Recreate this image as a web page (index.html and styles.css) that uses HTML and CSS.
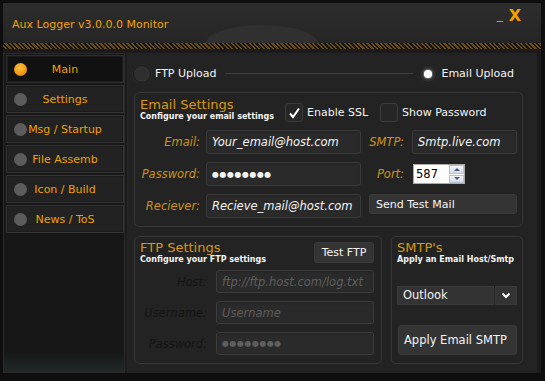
FILE: index.html
```
<html><head>
  <title>Aux Logger Monitor</title>
  <link rel="stylesheet" href="styles.css">
</head>
<body>
<div class="window">
  <div class="titlebar">
    <div class="hump"></div>
    <span class="app-title">Aux Logger v3.0.0.0 Monitor</span>
    <div class="win-buttons"><span class="min">_</span><span class="close">X</span></div>
  </div>
  <div class="hatch"></div>

  <div class="main">
    <div class="sidebar">
      <div class="tab active"><span class="dot"></span><span class="tab-label">Main</span></div>
      <div class="tab"><span class="dot"></span><span class="tab-label">Settings</span></div>
      <div class="tab"><span class="dot"></span><span class="tab-label">Msg / Startup</span></div>
      <div class="tab"><span class="dot"></span><span class="tab-label">File Assemb</span></div>
      <div class="tab"><span class="dot"></span><span class="tab-label">Icon / Build</span></div>
      <div class="tab"><span class="dot"></span><span class="tab-label">News / ToS</span></div>
    </div>

    <div class="content">
      <!-- upload mode -->
      <div class="mode-row">
        <span class="radio"></span><span class="radio-text">FTP Upload</span>
        <span class="rule"></span>
        <span class="radio on"></span><span class="radio-text">Email Upload</span>
      </div>

      <div class="group email">
        <div class="group-head">
          <div class="head-text">
            <div class="group-title">Email Settings</div>
            <div class="group-sub">Configure your email settings</div>
          </div>
          <div class="check ssl">
            <span class="box"><svg width="13" height="12" viewBox="0 0 13 12"><path d="M2 6.5 L5 10 L11 1.5" fill="none" stroke="#fff" stroke-width="2"/></svg></span>
            <span>Enable SSL</span>
          </div>
          <div class="check">
            <span class="box"></span>
            <span>Show Password</span>
          </div>
        </div>

        <div class="email-grid">
          <div class="label">Email:</div>
          <div class="field">Your_email@host.com</div>
          <div class="label second">SMTP:</div>
          <div class="field">Smtp.live.com</div>

          <div class="label">Password:</div>
          <div class="field dots">&#9679;&#9679;&#9679;&#9679;&#9679;&#9679;&#9679;&#9679;</div>
          <div class="label second">Port:</div>
          <div class="spinner">
            <span class="spin-value">587</span>
            <span class="spin-arrows">
              <span class="arrow up"></span>
              <span class="arrow down"></span>
            </span>
          </div>

          <div class="label">Reciever:</div>
          <div class="field">Recieve_mail@host.com</div>
          <div class="btn send">Send Test Mail</div>
        </div>
      </div>

      <div class="bottom-row">
        <div class="group ftp">
          <div class="group-head">
            <div class="head-text">
              <div class="group-title">FTP Settings</div>
              <div class="group-sub">Configure your FTP settings</div>
            </div>
            <div class="btn test">Test FTP</div>
          </div>
          <div class="ftp-grid">
            <div class="label off">Host:</div>
            <div class="field off">ftp://ftp.host.com/log.txt</div>
            <div class="label off">Username:</div>
            <div class="field off">Username</div>
            <div class="label off">Password:</div>
            <div class="field off dots">&#9679;&#9679;&#9679;&#9679;&#9679;&#9679;&#9679;&#9679;</div>
          </div>
        </div>

        <div class="group smtp">
          <div class="group-title">SMTP's</div>
          <div class="group-sub">Apply an Email Host/Smtp</div>
          <div class="combo">
            <span class="combo-value">Outlook</span>
            <span class="combo-btn"><svg width="10" height="7" viewBox="0 0 10 7"><path d="M1.5 1.5 L5 5 L8.5 1.5" fill="none" stroke="#fff" stroke-width="2"/></svg></span>
          </div>
          <div class="btn apply">Apply Email SMTP</div>
        </div>
      </div>
    </div>
  </div>
</div>
</body></html>
```

FILE: styles.css
```
body {
  margin: 0;
  background: #0e0e0e;
  font-family: "DejaVu Sans", sans-serif;
  font-size: 11px;
  color: #f4f4f4;
}

.window {
  width: 545px;
  height: 381px;
  box-sizing: border-box;
  border-style: solid;
  border-color: #0e0e0e;
  border-width: 3px 4px 8px 3px;
  display: flex;
  flex-direction: column;
}

/* title bar */
.titlebar {
  height: 40px;
  flex: none;
  position: relative;
  overflow: hidden;
  display: flex;
  align-items: center;
  padding: 0 20px 0 9px;
  background: linear-gradient(#2d2d2d, #252525);
}

.hump {
  position: absolute;
  left: 202px;
  top: 22px;
  width: 114px;
  height: 40px;
  border-radius: 50%;
  background: #303030;
}

.app-title {
  position: relative;
  color: #f2a200;
  font-size: 11px;
  margin-top: 3px;
}

.win-buttons {
  position: relative;
  margin-left: auto;
  align-self: flex-start;
  padding-top: 4px;
  color: #f5a000;
  display: flex;
  align-items: flex-end;
  gap: 6px;
}

.min {
  font-size: 12px;
  line-height: 17px;
}

.close {
  font-size: 16px;
  font-weight: bold;
  line-height: 17px;
}

.hatch {
  height: 6px;
  flex: none;
  background: repeating-linear-gradient(45deg, #151310 0px, #151310 1.6px, #6a4c14 1.6px, #6a4c14 3.2px);
}

.main {
  flex: 1;
  display: flex;
  gap: 2px;
  padding: 4px 4px 0 0;
  background: #1b1b1b;
}

/* side menu */
.sidebar {
  width: 122px;
  flex: none;
  box-sizing: border-box;
  border: 1px solid #2b2b2b;
  padding: 1px 0 0 2px;
  background: linear-gradient(#171717 0, #171717 calc(100% - 20px), #212828 100%);
  display: flex;
  flex-direction: column;
  gap: 2px;
}

.tab {
  height: 28px;
  box-sizing: border-box;
  border: 1px solid #343434;
  background: #222;
  box-shadow: inset 0 0 0 1px #1c1c1c;
  display: grid;
  grid-template-columns: 20px 1fr 20px;
  align-items: center;
}

.tab.active {
  background: #111;
  border-color: #2e2e2e;
}

.dot {
  width: 13px;
  height: 13px;
  margin-left: 7px;
  border-radius: 50%;
  background: #5c5c5c;
}

.tab.active .dot {
  background: radial-gradient(circle at 45% 35%, #ffc040 0, #f59a10 55%, #d07800 100%);
}

.tab-label {
  text-align: center;
  color: #f0a000;
  white-space: nowrap;
}

/* main panel */
.content {
  flex: 1;
  background: #232323;
  border-left: 1px solid #262626;
  padding: 9px 14px 9px 6px;
}

.mode-row {
  height: 23px;
  display: flex;
  align-items: center;
  margin-left: -1px;
  padding-right: 9px;
}

.radio {
  width: 18px;
  height: 18px;
  box-sizing: border-box;
  border-radius: 50%;
  background: #2f2f2f;
  border: 1px solid #1c1c1c;
  box-shadow: 0 0 0 1px #2a2a2a;
  display: flex;
  align-items: center;
  justify-content: center;
}

.radio.on::after {
  content: '';
  width: 8px;
  height: 8px;
  border-radius: 50%;
  background: #fff;
  box-shadow: 0 0 2px #fff;
}

.radio-text {
  margin-left: 4px;
}

.rule {
  flex: 1;
  height: 1px;
  background: #3f3f3f;
  margin: 0 6px 0 8px;
}

.group {
  box-sizing: border-box;
  border: 1px solid #393939;
  border-radius: 5px;
}

.group.email {
  margin-top: 7px;
  height: 135px;
  padding: 0 5px 0 0;
}

.group-head {
  display: flex;
  align-items: flex-start;
  padding-left: 5px;
}

.email .group-head {
  height: 33px;
  padding-top: 4px;
  box-sizing: border-box;
}

.head-text {
  width: 145px;
}

.group-title {
  color: #d9980c;
  font-size: 13px;
  line-height: 15px;
}

.group-sub {
  font-size: 8px;
  font-weight: bold;
  line-height: 10px;
  white-space: nowrap;
}

.check {
  display: flex;
  align-items: center;
  gap: 4px;
  margin-top: 6px;
}

.check.ssl {
  width: 95px;
}

.box {
  width: 18px;
  height: 19px;
  box-sizing: border-box;
  border: 1px solid #3c3c3c;
  border-radius: 3px;
  background: #262626;
  display: flex;
  align-items: center;
  justify-content: center;
}

.email-grid {
  display: grid;
  grid-template-columns: 71px 155px 51px 105px;
  grid-auto-rows: 24px;
  row-gap: 8px;
  margin-top: 4px;
}

.label {
  align-self: center;
  text-align: right;
  padding-right: 6px;
  font-style: italic;
  color: #cc9418;
  font-size: 11.5px;
}

.label.second {
  padding-right: 8px;
}

.field {
  box-sizing: border-box;
  border: 1px solid #3c3c3c;
  border-radius: 3px;
  background: #2a2a2a;
  box-shadow: inset 0 1px 2px #222;
  display: flex;
  align-items: center;
  padding-left: 5px;
  font-style: italic;
  font-size: 11.5px;
  white-space: nowrap;
  overflow: hidden;
}

.field.dots {
  font-style: normal;
  font-size: 8px;
  letter-spacing: 0.5px;
}

.spinner {
  align-self: center;
  width: 52px;
  height: 20px;
  box-sizing: border-box;
  margin-left: 1px;
  border: 1px solid #aaa;
  background: #fff;
  display: flex;
}

.spin-value {
  flex: 1;
  color: #000;
  padding-left: 2px;
  line-height: 18px;
  font-size: 11.5px;
}

.spin-arrows {
  width: 15px;
  display: flex;
  flex-direction: column;
  gap: 1px;
  background: #fff;
}

.arrow {
  flex: 1;
  background: linear-gradient(#f4f6fb, #d6dbe8);
  border: 1px solid #b9c0cf;
  display: flex;
  align-items: center;
  justify-content: center;
}

.arrow::after {
  content: '';
  border-left: 3px solid transparent;
  border-right: 3px solid transparent;
}

.arrow.up::after {
  border-bottom: 3px solid #4d5a86;
}

.arrow.down::after {
  border-top: 3px solid #4d5a86;
}

.btn {
  box-sizing: border-box;
  background: #343434;
  border: 1px solid #3a3a3a;
  border-radius: 3px;
  display: flex;
  align-items: center;
}

.btn.send {
  grid-column: 3 / 5;
  margin-left: 8px;
  height: 20px;
  padding-left: 6px;
}

.bottom-row {
  display: flex;
  gap: 9px;
  margin-top: 9px;
}

.group.ftp {
  width: 248px;
  height: 128px;
  padding-right: 7px;
}

.ftp .group-head {
  height: 29px;
  padding-top: 3px;
  box-sizing: border-box;
}

.ftp .head-text {
  width: auto;
}

.btn.test {
  margin-left: auto;
  margin-top: 2px;
  width: 60px;
  height: 21px;
  justify-content: center;
}

.ftp-grid {
  display: grid;
  grid-template-columns: 81px 158px;
  grid-auto-rows: 23px;
  row-gap: 8px;
  margin-top: 4px;
}

.ftp-grid .label {
  padding-right: 9px;
}

.label.off {
  color: #141414;
}

.field.off {
  color: #5e5e5e;
}

.group.smtp {
  width: 132px;
  height: 128px;
  padding: 3px 5px 0 5px;
}

.combo {
  margin-top: 21px;
  height: 19px;
  display: flex;
  gap: 1px;
}

.combo-value {
  flex: 1;
  background: #333;
  border: 1px solid #3a3a3a;
  padding-left: 5px;
  line-height: 17px;
  font-size: 11.5px;
}

.combo-btn {
  width: 20px;
  background: #333;
  border: 1px solid #3a3a3a;
  display: flex;
  align-items: center;
  justify-content: center;
}

.btn.apply {
  margin-top: 20px;
  margin-left: 1px;
  height: 30px;
  padding-left: 5px;
  font-size: 11.5px;
}
```
